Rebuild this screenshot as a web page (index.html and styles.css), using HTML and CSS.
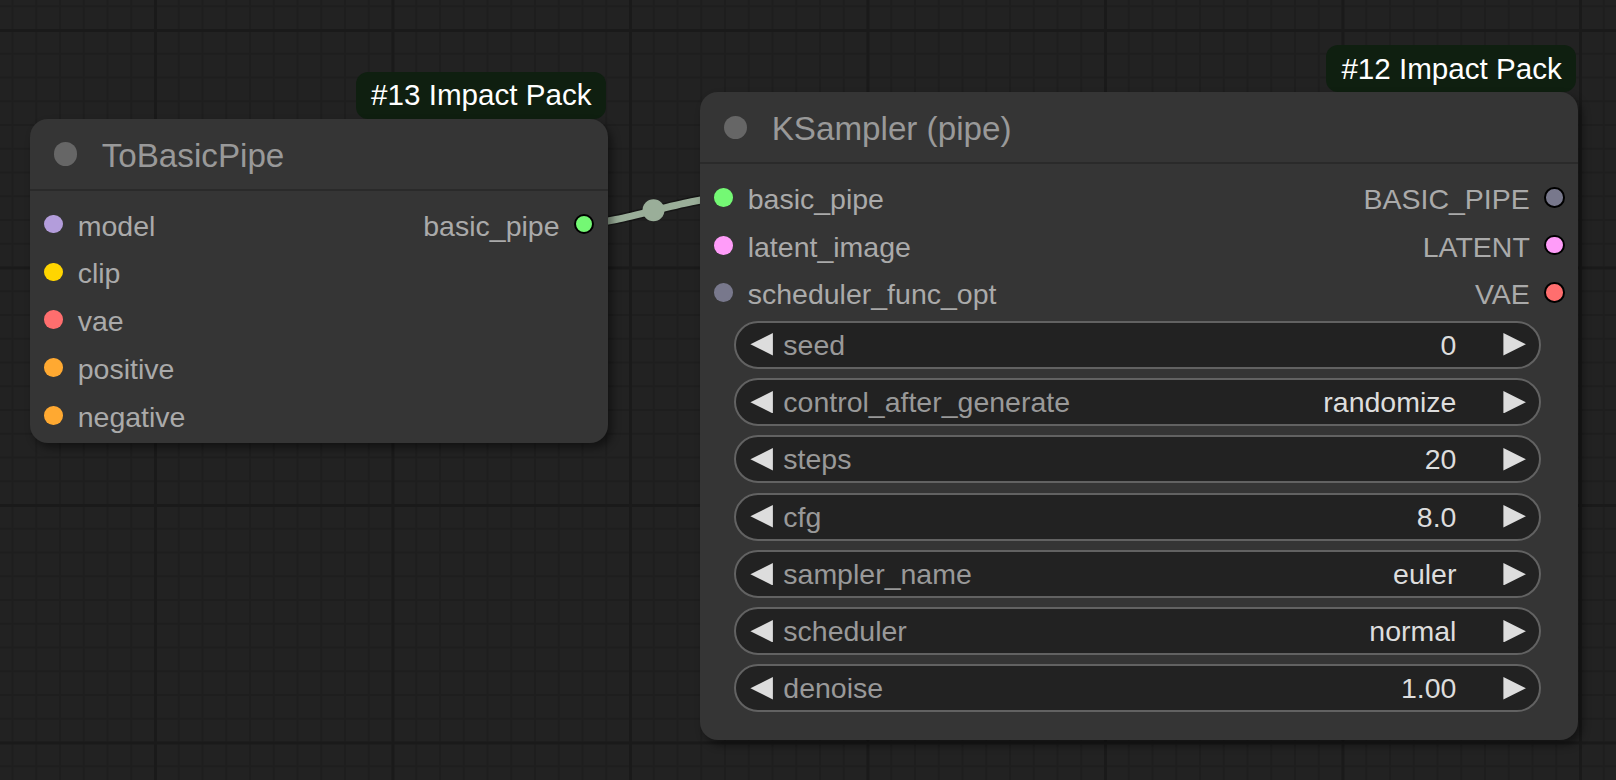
FILE: index.html
```html
<!DOCTYPE html>
<html lang="en">
<head>
<meta charset="utf-8">
<title>ComfyUI nodes</title>
<link rel="stylesheet" href="styles.css">
</head>
<body>
<div class="canvas">
  <svg class="links" width="1616" height="780" viewBox="0 0 1616 780">
    <path class="link-shadow" d="M584.5 223.5 C 619.5 223.5, 688 197.7, 723 197.7"/>
    <path class="link" d="M584.5 223.5 C 619.5 223.5, 688 197.7, 723 197.7"/>
    <circle class="link-dot" cx="653.5" cy="210.3" r="11"/>
  </svg>

  <div class="group g13">
    <div class="badge">#13 Impact Pack</div>
    <div class="node">
      <div class="title"><span class="tdot"></span><span class="ttext">ToBasicPipe</span></div>
      <div class="body">
        <div class="slots">
          <div class="col-in">
            <div class="slot"><span class="sd c-model"></span><span class="sl">model</span></div>
            <div class="slot"><span class="sd c-clip"></span><span class="sl">clip</span></div>
            <div class="slot"><span class="sd c-vae"></span><span class="sl">vae</span></div>
            <div class="slot"><span class="sd c-cond"></span><span class="sl">positive</span></div>
            <div class="slot"><span class="sd c-cond"></span><span class="sl">negative</span></div>
          </div>
          <div class="col-out">
            <div class="slot out"><span class="sl">basic_pipe</span><span class="sd ob c-pipe"></span></div>
          </div>
        </div>
      </div>
    </div>
  </div>

  <div class="group g12">
    <div class="badge">#12 Impact Pack</div>
    <div class="node">
      <div class="title"><span class="tdot"></span><span class="ttext">KSampler (pipe)</span></div>
      <div class="body body-ks">
        <div class="slots">
          <div class="col-in">
            <div class="slot"><span class="sd c-pipe"></span><span class="sl">basic_pipe</span></div>
            <div class="slot"><span class="sd c-latent"></span><span class="sl">latent_image</span></div>
            <div class="slot"><span class="sd c-sched"></span><span class="sl">scheduler_func_opt</span></div>
          </div>
          <div class="col-out">
            <div class="slot out"><span class="sl">BASIC_PIPE</span><span class="sd ob c-sched"></span></div>
            <div class="slot out"><span class="sl">LATENT</span><span class="sd ob c-latent"></span></div>
            <div class="slot out"><span class="sl">VAE</span><span class="sd ob c-vae"></span></div>
          </div>
        </div>
        <div class="widgets">
          <div class="widget">
            <svg class="arr" viewBox="0 0 23 23"><polygon points="23,0 0,11.5 23,23"/></svg>
            <span class="wl">seed</span><span class="wv">0</span>
            <svg class="arr" viewBox="0 0 23 23"><polygon points="0,0 23,11.5 0,23"/></svg>
          </div>
          <div class="widget">
            <svg class="arr" viewBox="0 0 23 23"><polygon points="23,0 0,11.5 23,23"/></svg>
            <span class="wl">control_after_generate</span><span class="wv">randomize</span>
            <svg class="arr" viewBox="0 0 23 23"><polygon points="0,0 23,11.5 0,23"/></svg>
          </div>
          <div class="widget">
            <svg class="arr" viewBox="0 0 23 23"><polygon points="23,0 0,11.5 23,23"/></svg>
            <span class="wl">steps</span><span class="wv">20</span>
            <svg class="arr" viewBox="0 0 23 23"><polygon points="0,0 23,11.5 0,23"/></svg>
          </div>
          <div class="widget">
            <svg class="arr" viewBox="0 0 23 23"><polygon points="23,0 0,11.5 23,23"/></svg>
            <span class="wl">cfg</span><span class="wv">8.0</span>
            <svg class="arr" viewBox="0 0 23 23"><polygon points="0,0 23,11.5 0,23"/></svg>
          </div>
          <div class="widget">
            <svg class="arr" viewBox="0 0 23 23"><polygon points="23,0 0,11.5 23,23"/></svg>
            <span class="wl">sampler_name</span><span class="wv">euler</span>
            <svg class="arr" viewBox="0 0 23 23"><polygon points="0,0 23,11.5 0,23"/></svg>
          </div>
          <div class="widget">
            <svg class="arr" viewBox="0 0 23 23"><polygon points="23,0 0,11.5 23,23"/></svg>
            <span class="wl">scheduler</span><span class="wv">normal</span>
            <svg class="arr" viewBox="0 0 23 23"><polygon points="0,0 23,11.5 0,23"/></svg>
          </div>
          <div class="widget">
            <svg class="arr" viewBox="0 0 23 23"><polygon points="23,0 0,11.5 23,23"/></svg>
            <span class="wl">denoise</span><span class="wv">1.00</span>
            <svg class="arr" viewBox="0 0 23 23"><polygon points="0,0 23,11.5 0,23"/></svg>
          </div>
        </div>
      </div>
    </div>
  </div>
</div>
</body>
</html>
```

FILE: styles.css
```css
* { box-sizing: border-box; }

html, body {
  margin: 0;
  padding: 0;
  width: 1616px;
  height: 780px;
  overflow: hidden;
  background: #222;
  font-family: "Liberation Sans", Arial, sans-serif;
}

.canvas {
  position: relative;
  width: 1616px;
  height: 780px;
  overflow: hidden;
  background-color: #222222;
  background-image:
    linear-gradient(to right, #1a1a1a 3px, transparent 3px),
    linear-gradient(to bottom, #1a1a1a 3px, transparent 3px),
    linear-gradient(to right, #1e1e1e 2px, transparent 2px),
    linear-gradient(to bottom, #1e1e1e 2px, transparent 2px);
  background-size: 237.5px 237.5px, 237.5px 237.5px, 23.75px 23.75px, 23.75px 23.75px;
  background-position: 154px 29px, 154px 29px, 154px 29px, 154px 29px;
}

.links {
  position: absolute;
  left: 0;
  top: 0;
}
.link-shadow {
  fill: none;
  stroke: rgba(0, 0, 0, 0.35);
  stroke-width: 10;
}
.link {
  fill: none;
  stroke: #9aae99;
  stroke-width: 7;
}
.link-dot { fill: #9aae99; }

.group {
  position: absolute;
  display: flex;
  flex-direction: column;
}
.g13 { left: 30px; top: 71.5px; width: 578px; }
.g12 { left: 700px; top: 45px; width: 878.3px; }

.badge {
  align-self: flex-end;
  margin-right: 2.5px;
  height: 47.3px;
  padding: 0 14px 0 15px;
  display: flex;
  align-items: center;
  background: #0f1f10;
  color: #fff;
  font-size: 29.6px;
  border-radius: 12px;
}

.node {
  background: #353535;
  border-radius: 18px;
  box-shadow: 4px 5px 8px rgba(0, 0, 0, 0.45);
}

.title {
  height: 72px;
  border-bottom: 2px solid #2a2a2a;
  display: flex;
  align-items: center;
  padding-left: 23.5px;
}
.tdot {
  width: 23.5px;
  height: 23.5px;
  border-radius: 50%;
  background: #666;
  flex: none;
}
.ttext {
  margin-left: 24.7px;
  color: #999;
  font-size: 33.2px;
  line-height: 37px;
  padding-top: 3px;
  white-space: nowrap;
}

.body {
  padding: 9.3px 0 3px;
}
.body-ks {
  padding: 9.65px 0 27.5px;
}

.slots {
  display: flex;
  justify-content: space-between;
}
.col-in, .col-out {
  display: flex;
  flex-direction: column;
}
.body .slot { height: 47.9px; }
.body-ks .slot { height: 47.5px; }

.slot {
  display: flex;
  align-items: center;
  padding-left: 14px;
}
.slot.out {
  padding-left: 0;
  padding-right: 13.7px;
  justify-content: flex-end;
}
.sd {
  width: 18.7px;
  height: 18.7px;
  border-radius: 50%;
  flex: none;
}
.sd.ob {
  width: 20.5px;
  height: 20.5px;
  border: 2px solid #000;
}
.sl {
  color: #aaa;
  font-size: 28.5px;
  line-height: 32px;
  padding-top: 3px;
  white-space: nowrap;
}
.slot .sd + .sl { margin-left: 15px; }
.slot.out .sl { margin-right: 14.3px; }

.c-model { background: #b39ddb; }
.c-clip { background: #ffd500; }
.c-vae { background: #ff6e6e; }
.c-cond { background: #ffa931; }
.c-pipe { background: #74f874; }
.c-latent { background: #ff9cf9; }
.c-sched { background: #78788c; }

.widgets {
  margin-top: 4.25px;
  margin-left: 34.3px;
  width: 806.4px;
  display: flex;
  flex-direction: column;
  gap: 9.3px;
}
.widget {
  height: 48px;
  border: 2px solid #626262;
  border-radius: 24px;
  background: #222;
  display: flex;
  align-items: center;
  padding: 0 12.7px 0 13.7px;
}
.arr {
  width: 23.3px;
  height: 22.5px;
  flex: none;
}
.arr polygon { fill: #ddd; }
.wl {
  margin-left: 10px;
  color: #999;
  font-size: 28.5px;
  line-height: 32px;
  white-space: nowrap;
}
.wv {
  margin-left: auto;
  margin-right: 46.3px;
  color: #ddd;
  font-size: 28.5px;
  line-height: 32px;
  white-space: nowrap;
}
```
